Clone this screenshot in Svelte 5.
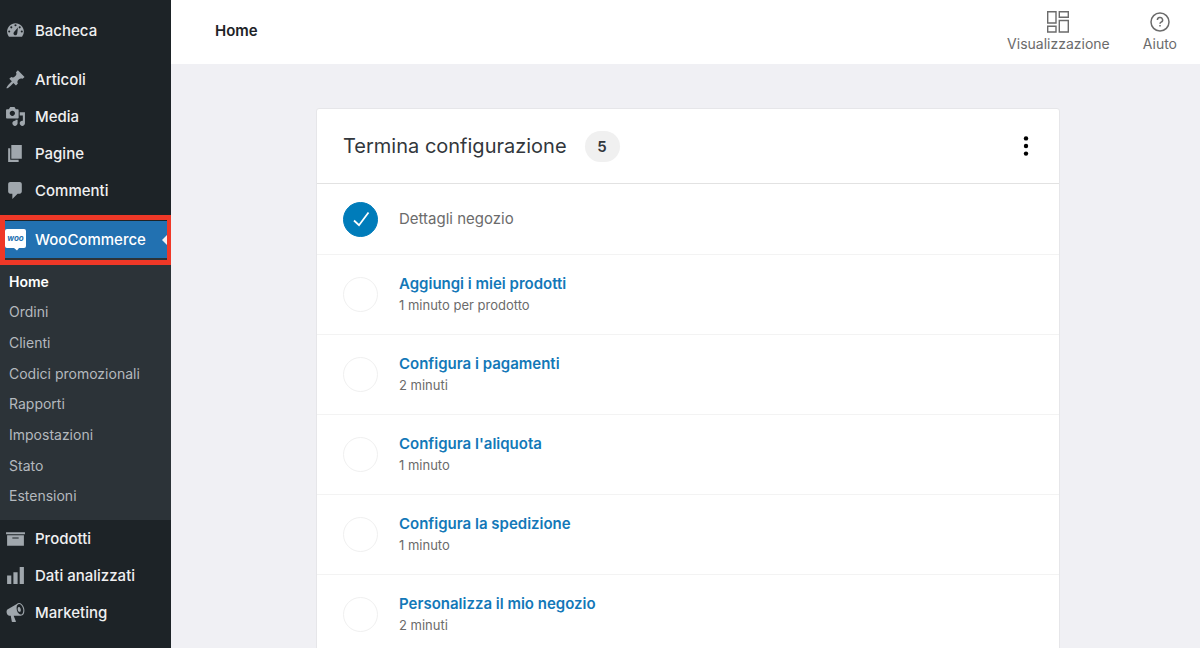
<script>
    // Sidebar icons, drawn on a 20x20 grid
    const icons = {
        dashboard: 'M3.76 16h12.48A7.96 7.96 0 0 0 18 11c0-4.42-3.58-8-8-8s-8 3.58-8 8c0 1.89.66 3.63 1.76 5zM10 4a1 1 0 1 1 0 2 1 1 0 0 1 0-2zM6 6a1 1 0 1 1 0 2 1 1 0 0 1 0-2zm8 0a1 1 0 1 1 0 2 1 1 0 0 1 0-2zm-1.7 1.2-.6 5.4c-.1 1.2-.8 2-1.8 2s-1.8-.8-1.8-1.8c0-.5.2-1 .5-1.4zM4 10a1 1 0 1 1 0 2 1 1 0 0 1 0-2zm12 0a1 1 0 1 1 0 2 1 1 0 0 1 0-2z',
        pin: 'M10.44 3.02l1.82-1.82 6.36 6.35-1.83 1.82c-1.05-.68-2.48-.57-3.41.36l-.75.75c-.92.93-1.04 2.35-.35 3.41l-1.83 1.82-2.41-2.41-2.8 2.79c-.42.42-3.38 2.71-3.8 2.29s1.86-3.39 2.28-3.81l2.79-2.79-2.4-2.4 1.83-1.82c1.05.69 2.48.57 3.4-.36l.75-.75c.93-.92 1.05-2.35.35-3.43z',
        media: 'M13 11V4c0-.55-.45-1-1-1h-1.67L9 1H5L3.67 3H2c-.55 0-1 .45-1 1v7c0 .55.45 1 1 1h10c.55 0 1-.45 1-1zM7 4.5c1.38 0 2.5 1.12 2.5 2.5S8.38 9.5 7 9.5 4.5 8.38 4.5 7 5.62 4.5 7 4.5zM14 6h5v10.5c0 1.38-1.12 2.5-2.5 2.5S14 17.88 14 16.5s1.12-2.5 2.5-2.5c.17 0 .34.02.5.05V9h-3V6zm-4 8.05V13h2v3.5c0 1.38-1.12 2.5-2.5 2.5S7 17.88 7 16.5 8.12 14 9.5 14c.17 0 .34.02.5.05z',
        page: 'M6 15V2h10v13H6zm-1 1h8v2H3V5h2v11z',
        comment: 'M5 2h9c1.1 0 2 .9 2 2v7c0 1.1-.9 2-2 2h-2l-5 5v-5H5c-1.1 0-2-.9-2-2V4c0-1.1.9-2 2-2z',
        archive: 'M19 4v2H1V4h18zM2 7h16v10H2V7zm11 3V9H7v1h6z',
        chart: 'M18 18V2h-4v16h4zm-6 0V7H8v11h4zm-10 0h4v-8H2v8z',
        megaphone: 'M18.15 5.94c.46 1.62.38 3.22-.02 4.48-.42 1.28-1.26 2.18-2.3 2.48-.16.06-.26.06-.4.06-.06.02-.12.02-.18.02-.06.02-.14.02-.22.02h-6.8l2.22 5.5c.02.14-.06.26-.14.34-.08.1-.24.16-.34.16H6.95c-.1 0-.26-.06-.34-.16-.08-.08-.16-.2-.14-.34l-1-5.5H4.25l-.02-.02c-.5.06-1.08-.18-1.54-.62s-.88-1.08-1.06-1.88c-.24-.8-.2-1.56-.02-2.2.18-.62.58-1.08 1.06-1.3l.02-.02 9-5.4c.1-.06.18-.1.24-.16.06-.04.14-.08.24-.12.16-.08.28-.12.5-.18 1.04-.3 2.24.1 3.22.98s1.84 2.24 2.26 3.86zm-2.58 5.98h-.02c.4-.1.74-.34 1.04-.7.58-.7.86-1.76.86-3.04 0-.64-.1-1.3-.28-1.98-.34-1.36-1.02-2.5-1.78-3.24s-1.68-1.1-2.46-.88c-.82.22-1.4.96-1.7 2-.32 1.04-.28 2.36.06 3.72.38 1.36 1 2.5 1.8 3.24.78.74 1.62 1.1 2.48.88zm-2.54-7.08c.22-.04.42-.02.62.04.38.16.76.48 1.02 1s.42 1.2.42 1.78c0 .3-.04.56-.12.8-.18.48-.44.84-.86.94-.34.1-.8-.06-1.14-.4s-.64-.86-.78-1.5c-.18-.62-.12-1.24.02-1.72s.48-.84.82-.94z',
    };

    const menuGroups = [
        [{ label: 'Bacheca', icon: 'dashboard' }],
        [
            { label: 'Articoli', icon: 'pin' },
            { label: 'Media', icon: 'media' },
            { label: 'Pagine', icon: 'page' },
            { label: 'Commenti', icon: 'comment' },
        ],
        [
            {
                label: 'WooCommerce',
                icon: 'woo',
                children: ['Home', 'Ordini', 'Clienti', 'Codici promozionali', 'Rapporti', 'Impostazioni', 'Stato', 'Estensioni'],
            },
            { label: 'Prodotti', icon: 'archive' },
            { label: 'Dati analizzati', icon: 'chart' },
            { label: 'Marketing', icon: 'megaphone' },
        ],
    ];

    const tasks = [
        { title: 'Dettagli negozio', done: true },
        { title: 'Aggiungi i miei prodotti', time: '1 minuto per prodotto' },
        { title: 'Configura i pagamenti', time: '2 minuti' },
        { title: "Configura l'aliquota", time: '1 minuto' },
        { title: 'Configura la spedizione', time: '1 minuto' },
        { title: 'Personalizza il mio negozio', time: '2 minuti' },
    ];

    // Tasks left to do
    const remaining = tasks.filter((task) => !task.done).length;

    let currentPage = $state('Home');
</script>

<div class="admin">
    <nav class="sidebar" aria-label="Menu principale">
        {#each menuGroups as group}
            <ul class="menu-group">
                {#each group as item}
                    <li>
                        <a class="menu-item" class:current={item.children} href="#{item.icon}">
                            {#if item.icon === 'woo'}
                                <svg class="menu-icon" viewBox="0 0 21 21" aria-hidden="true">
                                    <path fill="#fff" d="M2 0h17a2 2 0 0 1 2 2v15a2 2 0 0 1-2 2h-5l-2 2.5L9 19H2a2 2 0 0 1-2-2V2a2 2 0 0 1 2-2z" />
                                    <text class="woo-mark" x="10.5" y="12" text-anchor="middle">woo</text>
                                </svg>
                            {:else}
                                <svg class="menu-icon" viewBox="0 0 20 20" aria-hidden="true">
                                    <path fill="currentColor" fill-rule="evenodd" d={icons[item.icon]} />
                                </svg>
                            {/if}
                            <span>{item.label}</span>
                        </a>
                        {#if item.children}
                            <ul class="submenu">
                                {#each item.children as child}
                                    <li>
                                        <a href="#{child}" class:active={child === currentPage} onclick={() => (currentPage = child)}>{child}</a>
                                    </li>
                                {/each}
                            </ul>
                        {/if}
                    </li>
                {/each}
            </ul>
        {/each}
    </nav>

    <div class="content">
        <header class="topbar">
            <h1>{currentPage}</h1>
            <div class="tools">
                <button type="button">
                    <svg width="24" height="24" viewBox="0 0 24 24" fill="none" stroke="currentColor" stroke-width="1.4" aria-hidden="true">
                        <path d="M1.7 1.7h8.3v11.3H1.7zM13.3 1.7h9v5.6h-9zM1.7 16.3h8.3v5.7H1.7zM13.3 10.5h9V22h-9z" />
                    </svg>
                    <span>Visualizzazione</span>
                </button>
                <button type="button">
                    <svg width="24" height="24" viewBox="0 0 24 24" fill="none" stroke="currentColor" stroke-width="1.5" aria-hidden="true">
                        <circle cx="12" cy="12" r="9" />
                        <path d="M9.4 10a2.6 2.4 0 1 1 3.7 2.1c-.8.4-1.1.7-1.1 1.7M12 15v1.6" />
                    </svg>
                    <span>Aiuto</span>
                </button>
            </div>
        </header>

        <main>
            <section class="card">
                <div class="card-header">
                    <h2>Termina configurazione</h2>
                    <span class="badge">{remaining}</span>
                    <button type="button" class="more" aria-label="Opzioni elenco attività">
                        <svg width="24" height="24" viewBox="0 0 24 24" fill="currentColor" aria-hidden="true">
                            <circle cx="12" cy="4.4" r="2.2" />
                            <circle cx="12" cy="12" r="2.2" />
                            <circle cx="12" cy="19.6" r="2.2" />
                        </svg>
                    </button>
                </div>
                <ul class="tasks">
                    {#each tasks as task}
                        <li class="task" class:done={task.done}>
                            <span class="status">
                                {#if task.done}
                                    <svg width="24" height="24" viewBox="0 0 24 24" fill="none" stroke="#fff" stroke-width="1.8" aria-hidden="true">
                                        <path d="M5 13.5 10 18.2 19.5 5.5" />
                                    </svg>
                                {/if}
                            </span>
                            <div class="task-text">
                                {#if task.done}
                                    <span class="task-title">{task.title}</span>
                                {:else}
                                    <a class="task-title" href="#task">{task.title}</a>
                                    <span class="task-time">{task.time}</span>
                                {/if}
                            </div>
                        </li>
                    {/each}
                </ul>
            </section>
        </main>
    </div>
</div>

<style>
    :global(body) {
        margin: 0;
        overflow: hidden;
    }

    .admin {
        display: flex;
        height: 100vh;
        overflow: hidden;
        background: #f0f0f4;
        color: #1d2327;
        font-family: Inter, 'Liberation Sans', sans-serif;
        font-size: 15px;
    }

    ul {
        list-style: none;
        margin: 0;
        padding: 0;
    }

    a {
        text-decoration: none;
    }

    button {
        background: none;
        border: none;
        padding: 0;
        color: inherit;
        font: inherit;
        cursor: pointer;
    }

    /* Sidebar */
    .sidebar {
        flex: none;
        display: flex;
        flex-direction: column;
        gap: 12px;
        width: 171px;
        box-sizing: border-box;
        padding-top: 12px;
        background: #1d2327;
    }

    .menu-item {
        position: relative;
        display: flex;
        align-items: center;
        gap: 9px;
        height: 37px;
        padding-left: 5px;
        color: #f0f0f1;
        font-weight: 500;
    }

    .menu-icon {
        flex: none;
        width: 21px;
        height: 21px;
        color: #a0a7ad;
        overflow: visible;
    }

    .menu-item.current {
        background: #2271b1;
        color: #fff;
    }

    /* Pointer towards the page */
    .menu-item.current::before {
        content: '';
        position: absolute;
        right: 3px;
        border: 6px solid transparent;
        border-left-width: 0;
        border-right-color: #f0f0f4;
    }

    /* Red highlight frame */
    .menu-item.current::after {
        content: '';
        position: absolute;
        inset: -6px 0 -7px;
        border: 5px solid #ef3827;
        border-right-width: 4px;
    }

    .woo-mark {
        fill: #2271b1;
        font-size: 8px;
        font-style: italic;
        font-weight: 700;
    }

    .submenu {
        display: grid;
        grid-auto-rows: 1fr;
        height: 245px;
        padding: 8px 0 9px;
        background: #2c3338;
    }

    .submenu a {
        display: flex;
        align-items: center;
        height: 100%;
        padding-left: 9px;
        color: #b4b9be;
        font-size: 14px;
    }

    .submenu a.active {
        color: #fff;
        font-weight: 600;
    }

    /* Page */
    .content {
        flex: 1;
        min-width: 0;
    }

    .topbar {
        display: flex;
        align-items: center;
        justify-content: space-between;
        height: 64px;
        padding: 0 23px 0 44px;
        background: #fff;
    }

    h1 {
        margin: 0;
        padding-bottom: 2px;
        font-size: 15px;
        line-height: 20px;
        font-weight: 600;
    }

    .tools {
        display: flex;
        gap: 33px;
    }

    .tools button {
        display: flex;
        flex-direction: column;
        align-items: center;
        color: #6b6b6b;
        font-size: 14px;
        line-height: 20px;
    }

    main {
        padding: 44px 24px 0 29px;
    }

    .card {
        max-width: 742px;
        margin: 0 auto;
        background: #fff;
        border: 1px solid #e6e6e9;
        border-radius: 3px;
    }

    .card-header {
        display: flex;
        align-items: center;
        gap: 18px;
        height: 74px;
        padding: 0 21px 0 26px;
        border-bottom: 1px solid #e2e2e2;
    }

    h2 {
        margin: 0;
        color: #32373c;
        font-size: 20px;
        font-weight: 400;
    }

    .badge {
        width: 35px;
        border-radius: 16px;
        background: #f0f0f0;
        color: #32373c;
        line-height: 31px;
        font-weight: 600;
        text-align: center;
    }

    .more {
        display: flex;
        margin-left: auto;
        color: #000;
    }

    .task {
        display: flex;
        align-items: center;
        gap: 21px;
        height: 79px;
        padding: 0 26px;
        border-bottom: 1px solid #f3f3f3;
    }

    .task.done {
        height: 70px;
    }

    .status {
        flex: none;
        display: flex;
        align-items: center;
        justify-content: center;
        width: 35px;
        height: 35px;
        box-sizing: border-box;
        border: 1px solid #f0f0f0;
        border-radius: 50%;
    }

    .done .status {
        border-color: #007cba;
        background: #007cba;
    }

    .task-text {
        display: flex;
        flex-direction: column;
        padding-bottom: 2px;
    }

    .task-title {
        color: #1378b8;
        font-size: 15px;
        line-height: 22px;
        font-weight: 600;
    }

    .done .task-text {
        padding-bottom: 0;
    }

    .done .task-title {
        color: #6b6b6b;
        font-weight: 400;
    }

    .task-time {
        color: #6b6b6b;
        font-size: 13px;
        line-height: 20px;
    }
</style>
